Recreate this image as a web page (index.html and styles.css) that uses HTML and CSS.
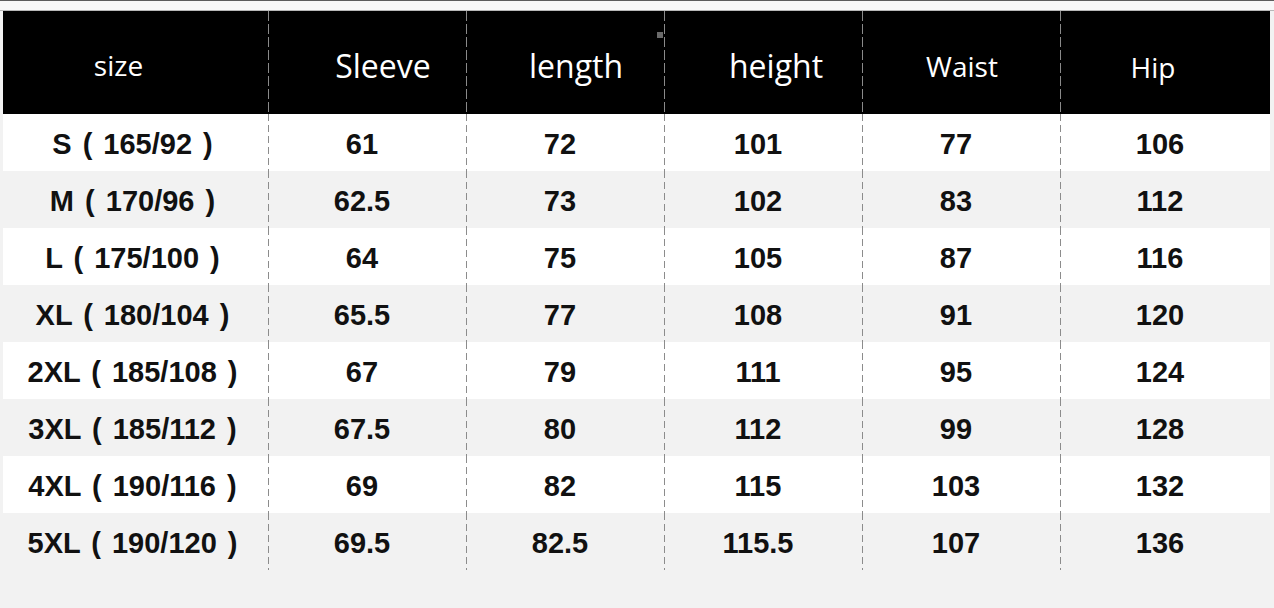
FILE: index.html
```html
<!DOCTYPE html>
<html lang="en">
<head>
<meta charset="utf-8">
<title>Size chart</title>
<link rel="stylesheet" href="styles.css">
</head>
<body>
<div class="topline"></div>
<div class="chart">
  <div class="row head">
    <div class="hc h-size">size</div>
    <div class="hc sep big h-sleeve">Sleeve</div>
    <div class="hc sep big h-length">length<span class="speck"></span></div>
    <div class="hc sep big h-height">height</div>
    <div class="hc sep h-waist">Waist</div>
    <div class="hc sep h-hip">Hip</div>
  </div>
  <div class="row"><div class="c first">S ( 165/92 )</div><div class="c sep">61</div><div class="c sep">72</div><div class="c sep">101</div><div class="c sep">77</div><div class="c sep">106</div></div>
  <div class="row alt"><div class="c first">M ( 170/96 )</div><div class="c sep">62.5</div><div class="c sep">73</div><div class="c sep">102</div><div class="c sep">83</div><div class="c sep">112</div></div>
  <div class="row"><div class="c first">L ( 175/100 )</div><div class="c sep">64</div><div class="c sep">75</div><div class="c sep">105</div><div class="c sep">87</div><div class="c sep">116</div></div>
  <div class="row alt"><div class="c first">XL ( 180/104 )</div><div class="c sep">65.5</div><div class="c sep">77</div><div class="c sep">108</div><div class="c sep">91</div><div class="c sep">120</div></div>
  <div class="row"><div class="c first">2XL ( 185/108 )</div><div class="c sep">67</div><div class="c sep">79</div><div class="c sep">111</div><div class="c sep">95</div><div class="c sep">124</div></div>
  <div class="row alt"><div class="c first">3XL ( 185/112 )</div><div class="c sep">67.5</div><div class="c sep">80</div><div class="c sep">112</div><div class="c sep">99</div><div class="c sep">128</div></div>
  <div class="row"><div class="c first">4XL ( 190/116 )</div><div class="c sep">69</div><div class="c sep">82</div><div class="c sep">115</div><div class="c sep">103</div><div class="c sep">132</div></div>
  <div class="row alt"><div class="c first">5XL ( 190/120 )</div><div class="c sep">69.5</div><div class="c sep">82.5</div><div class="c sep">115.5</div><div class="c sep">107</div><div class="c sep">136</div></div>
</div>
</body>
</html>
```
FILE: styles.css
```css
html, body {
  margin: 0;
  padding: 0;
}
body {
  background: #f2f2f2;
  width: 1274px;
  height: 608px;
  overflow: hidden;
}
.topline {
  height: 11px;
  box-sizing: border-box;
  border-top: 1px solid #5c5c5c;
  border-bottom: 1px solid #b8b8b8;
  background: #f8f8f8;
}
.chart {
  --cols: 265px 198px 198px 198px 198px 210px;
  margin-left: 3px;
  width: 1267px;
}
.row {
  display: grid;
  grid-template-columns: var(--cols);
  height: 57px;
  background: #ffffff;
}
.row.alt {
  background: #f2f2f2;
}
.row.head {
  height: 103px;
  background: #000;
}
.hc {
  position: relative;
  color: #fff;
  font-family: "Open Sans", "Noto Sans", sans-serif;
  font-size: 28px;
  line-height: 1;
  display: flex;
  justify-content: center;
  align-items: flex-start;
  padding-top: 41px;
  box-sizing: border-box;
}
.hc.big {
  font-size: 32px;
  padding-top: 39px;
}
.head .sep {
  background-image: repeating-linear-gradient(to bottom, #8a8a8a 0 10px, transparent 10px 13px);
  background-size: 1px 100%;
  background-repeat: no-repeat;
  background-position: left top;
}
.h-size { padding-right: 34px; padding-top: 40px; }
.h-sleeve { padding-left: 32px; }
.h-length { padding-left: 22px; padding-top: 42px; }
.h-height { padding-left: 26px; }
.h-waist { padding-left: 2px; }
.h-hip { padding-right: 24px; padding-top: 42px; }
.speck {
  position: absolute;
  right: 1px;
  top: 21px;
  width: 6px;
  height: 6px;
  background: #6a6a6a;
}
.c {
  font-family: "Liberation Sans", Arial, sans-serif;
  font-weight: bold;
  font-size: 29px;
  line-height: 1;
  color: #111;
  display: flex;
  justify-content: center;
  align-items: center;
  padding-top: 4px;
  padding-right: 10px;
  box-sizing: border-box;
  white-space: pre;
}
.c.first {
  padding-right: 6px;
  word-spacing: 3px;
}
.row .c.sep {
  background-image: repeating-linear-gradient(to bottom, #8c8c8c 0 7px, transparent 7px 11px);
  background-size: 1px 100%;
  background-repeat: no-repeat;
  background-position: left top;
}
```
